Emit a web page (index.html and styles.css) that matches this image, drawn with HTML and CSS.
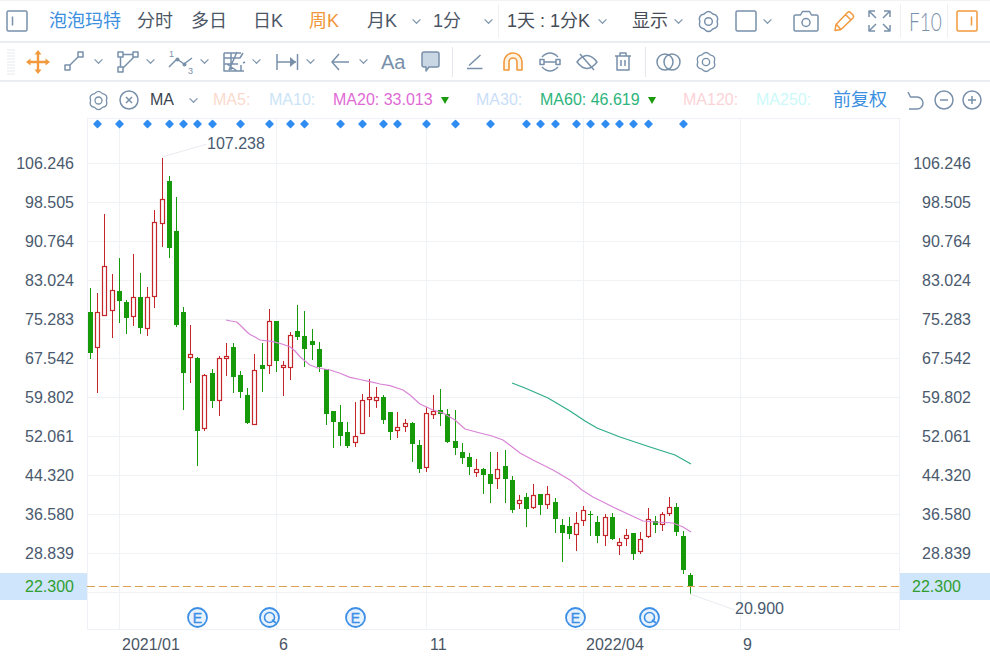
FILE: index.html
```html
<!DOCTYPE html>
<html lang="zh">
<head>
<meta charset="utf-8">
<title>泡泡玛特 周K</title>
<link rel="stylesheet" href="styles.css">
</head>
<body>
<svg class="defs" aria-hidden="true">
  <symbol id="gear" viewBox="0 0 24 24"><path d="M7.5 4.2Q12 -1 16.5 4.2Q23.3 5.5 21 12Q23.3 18.5 16.5 19.8Q12 25 7.5 19.8Q.7 18.5 3 12Q.7 5.5 7.5 4.2Z"/><circle cx="12" cy="12" r="4"/></symbol>
  <symbol id="chev" viewBox="0 0 12 8"><path d="M1.5 1.5L6 6L10.5 1.5"/></symbol>
</svg>
<header class="bar bar-main">
  <svg class="ic" width="22" height="22" viewBox="0 0 22 22"><rect x="1" y="1" width="20" height="20" rx="1.5"/><path d="M6.5 6.5V15.5"/></svg>
  <span class="tab tab-name">泡泡玛特</span>
  <span class="tab">分时</span>
  <span class="tab">多日</span>
  <span class="tab">日K</span>
  <span class="tab tab-on">周K</span>
  <span class="tab">月K</span>
  <svg class="ic chev"><use href="#chev"/></svg>
  <span class="tab">1分</span>
  <svg class="ic chev"><use href="#chev"/></svg>
  <i class="rule"></i>
  <span class="tab tab-dark">1天 : 1分K</span>
  <svg class="ic chev"><use href="#chev"/></svg>
  <span class="tab tab-dark">显示</span>
  <svg class="ic chev"><use href="#chev"/></svg>
  <svg class="ic" width="23" height="23"><use href="#gear"/></svg>
  <svg class="ic" width="22" height="22" viewBox="0 0 22 22"><rect x="1" y="1" width="20" height="20" rx="1.5"/></svg>
  <svg class="ic chev"><use href="#chev"/></svg>
  <svg class="ic" width="26" height="22" viewBox="0 0 26 22"><path d="M1 6.5Q1 5 2.500 5H7.500L9.500 1.500H16.500L18.500 5H23.500Q25 5 25 6.500V19.500Q25 21 23.500 21H2.500Q1 21 1 19.500Z"/><circle cx="13" cy="12.500" r="4"/></svg>
  <svg class="ic ic-hot" width="22" height="22" viewBox="0 0 22 22"><path d="M2 20.500L3 14.500L14.500 2.500Q16 1 17.500 2.500L20 5Q21.300 6.500 20 8L8 19.500ZM12.500 4.500L18 10M3.500 14.500L7.500 19"/></svg>
  <svg class="ic" width="23" height="22" viewBox="0 0 23 22"><path d="M1 7V1H7M16 1H22V7M1 15V21H7M16 21H22V15M2 2L8 8M21 2L15 8M2 20L8 14M21 20L15 14"/></svg>
  <i class="rule"></i>
  <span class="f10">F10</span>
  <i class="rule"></i>
  <svg class="ic ic-hot" width="22" height="22" viewBox="0 0 22 22"><rect x="1" y="1" width="20" height="20" rx="1.500"/><path d="M15.500 6.500V15.500"/></svg>
</header>

<nav class="bar bar-tools">
  <svg class="grip" width="8" height="26" viewBox="0 0 8 26"><path d="M0 1H8M0 4H8M0 7H8M0 10H8M0 13H8M0 16H8M0 19H8M0 22H8M0 25H8"/></svg>
  <svg class="ic ic-move" width="24" height="24" viewBox="0 0 24 24"><path d="M12 3V21M3 12H21"/><path class="solid" d="M12 0L15.500 4.500H8.500ZM12 24L15.500 19.500H8.500ZM0 12L4.500 8.500V15.500ZM24 12L19.500 8.500V15.500Z"/></svg>
  <svg class="ic" width="21" height="21" viewBox="0 0 21 21"><rect x="1" y="14" width="5" height="5"/><rect x="14" y="1" width="5" height="5"/><path d="M6 14L14 6"/></svg>
  <svg class="ic chev"><use href="#chev"/></svg>
  <svg class="ic" width="23" height="22" viewBox="0 0 23 22"><rect x="1" y="1" width="5" height="5"/><rect x="16" y="1" width="5" height="5"/><rect x="1" y="16" width="5" height="5"/><path d="M6 3.500H16M3.500 6V16M17 6L6 17"/></svg>
  <svg class="ic chev"><use href="#chev"/></svg>
  <svg class="ic" width="25" height="26" viewBox="0 0 25 26"><text class="mini" x="1" y="8">1</text><text class="mini" x="20" y="25">3</text><path d="M1 18L9 10L16 15L24 9"/><circle class="solid-b" cx="9.500" cy="10.500" r="2"/><circle class="solid-b" cx="16.500" cy="15.500" r="2"/></svg>
  <svg class="ic chev"><use href="#chev"/></svg>
  <svg class="ic" width="23" height="23" viewBox="0 0 23 23"><path d="M1 3H18M1 3V21H21M8 3V20M1 8H17M1 14H15M14 2L6 20M4 14L14 21M20 3L17 8M20 13L22 12M18 15V21"/></svg>
  <svg class="ic chev"><use href="#chev"/></svg>
  <svg class="ic" width="23" height="20" viewBox="0 0 23 20"><path d="M1 2V18M1 10H20M21.500 2V18"/><path class="solid-b" d="M14 5L20 10L14 15Z"/></svg>
  <svg class="ic chev"><use href="#chev"/></svg>
  <svg class="ic" width="19" height="18" viewBox="0 0 19 18"><path d="M8 1L1 9L8 17M1 9H18"/></svg>
  <svg class="ic chev"><use href="#chev"/></svg>
  <span class="aa">Aa</span>
  <svg class="ic ic-fill" width="19" height="21" viewBox="0 0 19 21"><path d="M3 1H16Q18 1 18 3V14Q18 16 16 16H8L5 20V16H3Q1 16 1 14V3Q1 1 3 1Z"/></svg>
  <i class="rule rule-tall"></i>
  <svg class="ic" width="17" height="17" viewBox="0 0 17 17"><path d="M1 15.500H16.500M3 12.500L14.500 2"/></svg>
  <svg class="ic ic-hot ic-mag" width="20" height="19" viewBox="0 0 20 19"><path d="M1 18V10A9 9 0 0 1 19 10V18H14V10A4 4 0 0 0 6 10V18Z"/></svg>
  <svg class="ic" width="22" height="22" viewBox="0 0 22 22"><path d="M3 6Q11 -2 19 6M3 16Q11 24 19 16M5 11H17"/><rect x="1" y="8.500" width="4" height="5"/><rect x="17" y="8.500" width="4" height="5"/></svg>
  <svg class="ic" width="22" height="20" viewBox="0 0 22 20"><path d="M1 10Q11 -3 21 10Q11 23 1 10ZM4 2L18 18"/></svg>
  <svg class="ic" width="18" height="19" viewBox="0 0 18 19"><path d="M1 4H17M6 4V1H12V4M3 4V18H15V4M7 8V14M11 8V14"/></svg>
  <i class="rule rule-tall"></i>
  <svg class="ic" width="25" height="18" viewBox="0 0 25 18"><circle cx="9" cy="9" r="8"/><circle cx="16" cy="9" r="8"/></svg>
  <svg class="ic" width="22" height="22"><use href="#gear"/></svg>
</nav>

<section class="bar bar-ma">
  <svg class="ic" width="21" height="21"><use href="#gear"/></svg>
  <svg class="ic" width="20" height="20" viewBox="0 0 20 20"><circle cx="10" cy="10" r="9"/><path d="M7 7L13 13M13 7L7 13"/></svg>
  <span class="ma-type">MA</span>
  <svg class="ic chev"><use href="#chev"/></svg>
  <span class="c-ma5">MA5:</span>
  <span class="c-ma10">MA10:</span>
  <span class="c-ma20">MA20: 33.013</span>
  <i class="down"></i>
  <span class="c-ma30">MA30:</span>
  <span class="c-ma60">MA60: 46.619</span>
  <i class="down"></i>
  <span class="c-ma120">MA120:</span>
  <span class="c-ma250">MA250:</span>
  <span class="fq">前复权</span>
  <svg class="ic" width="19" height="19" viewBox="0 0 19 19"><path d="M1 1L3.500 6H10A6 6 0 0 1 10 18H2"/></svg>
  <svg class="ic" width="20" height="20" viewBox="0 0 20 20"><circle cx="10" cy="10" r="9"/><path d="M6 10H14"/></svg>
  <svg class="ic" width="20" height="20" viewBox="0 0 20 20"><circle cx="10" cy="10" r="9"/><path d="M6 10H14M10 6V14"/></svg>
</section>

<main class="chart-wrap">
  <svg id="chart" class="chart" viewBox="0 118 990 540" width="990" height="540"></svg>
</main>
<script src="script.js"></script>
</body>
</html>
```

FILE: styles.css
```css
html, body {
  margin: 0;
  padding: 0;
  background: #fff;
  overflow: hidden;
  height: 658px;
}
body {
  font-family: "Liberation Sans", "Noto Sans CJK SC", sans-serif;
  color: #4a5565;
}
.defs { display: none; }
.bar {
  display: grid;
  align-items: center;
  justify-items: start;
  box-sizing: border-box;
}
.bar-main {
  height: 43px;
  border-top: 1px solid #f0f2f4;
  border-bottom: 2px solid #e9ecf0;
  padding-left: 6px;
  grid-template-columns: 43px 88px 54px 62px 56px 58px 44px 22px 50px 15px 9px 90px 35px 41px 24px 38px 27px 31px 40px 35px 32px 9px 38px 9px 22px;
}
.bar-tools {
  height: 39px;
  border-bottom: 2px solid #e9ecf0;
  padding-left: 7px;
  grid-template-columns: 19px 38px 29px 24px 28px 23px 31px 24px 28px 25px 29px 26px 27px 23px 40px 31px 14px 37px 36px 37px 38px 31px 11px 39px 22px;
}
.bar-ma {
  height: 36px;
  padding-left: 88px;
  font-size: 16px;
  white-space: nowrap;
  grid-template-columns: 31px 31px 38px 25px 56px 64px 108px 35px 64px 108px 35px 73px 77px 74px 27px 28px 20px;
}
.ic {
  display: block;
  fill: none;
  stroke: #7890aa;
  stroke-width: 1.5;
  stroke-linejoin: round;
  overflow: visible;
}
.chev {
  width: 11px;
  height: 7px;
  stroke: #8298ae;
  stroke-width: 1.4;
}
.ic-hot { stroke: #f1993c; }
.ic-move { stroke: #f1993c; stroke-width: 2.4; }
.solid { fill: #f1993c; stroke: none; }
.solid-b { fill: #7890aa; stroke: none; }
.ic-fill { fill: #c9d6e3; }
.ic-mag { fill: #fdf3e3; stroke-width: 1.6; }
.mini {
  font-family: "Liberation Sans", sans-serif;
  font-size: 9px;
  fill: #7890aa;
  stroke: none;
}
.tab {
  font-size: 18px;
  line-height: 24px;
  color: #4b5666;
  white-space: nowrap;
}
.tab-name { color: #3d8fe0; }
.tab-on { color: #f0963a; }
.tab-dark { color: #454c56; }
.rule {
  display: block;
  width: 1px;
  height: 34px;
  background: #eef0f3;
}
.rule-tall { height: 30px; background: #e4e7eb; }
.f10 {
  font-family: Lato, "Liberation Sans", sans-serif;
  font-weight: 300;
  font-size: 25px;
  line-height: 28px;
  color: #7890aa;
  transform: scaleX(0.76);
  transform-origin: left center;
}
.aa {
  font-size: 20px;
  line-height: 24px;
  color: #7890aa;
}
.grip { stroke: #e6e9ed; stroke-width: 1; display: block; }
.ma-type { color: #3b4450; font-size: 16px; }
.c-ma5 { color: #fbdacd; }
.c-ma10 { color: #cbe4f6; }
.c-ma20 { color: #df6ad5; }
.c-ma30 { color: #cadef8; }
.c-ma60 { color: #2db47c; }
.c-ma120 { color: #fbd3d7; }
.c-ma250 { color: #ccf9f9; }
.fq { color: #3d8fe0; font-size: 18px; line-height: 24px; }
.down {
  display: block;
  width: 0;
  height: 0;
  border-left: 4.5px solid transparent;
  border-right: 4.5px solid transparent;
  border-top: 7px solid #1a9a0c;
}
.chart-wrap { height: 540px; }
.chart { display: block; font-family: "Liberation Sans", sans-serif; }
.frame { fill: none; stroke: #eef1f5; stroke-width: 1; }
.grid { stroke: #f0f3f6; stroke-width: 1; fill: none; }
.axis { font-size: 16px; fill: #4a5a6e; }
.axis-x { font-size: 16px; fill: #4a5565; }
.note { font-size: 16px; fill: #4a5a70; }
.leader { stroke: #e9ebf0; stroke-width: 1; fill: none; }
.tag-bg { fill: #cfe5fc; }
.tag-text { font-size: 16px; fill: #2f9e2f; }
.dash { stroke: #dc9f52; stroke-width: 1.2; stroke-dasharray: 8 4; fill: none; }
.dia { fill: #2f8cf0; stroke: #2f8cf0; stroke-width: 1.5; stroke-linejoin: round; }
.up { fill: #fff; stroke: #c4262a; stroke-width: 1.2; }
.up-w { fill: #c4262a; }
.dn { fill: #169a0a; }
.ma20 { fill: none; stroke: #d884d6; stroke-width: 1.2; }
.ma60 { fill: none; stroke: #2fac8a; stroke-width: 1.2; }
.ev-c { fill: #e8f3fe; stroke: #3d8fe6; stroke-width: 1.8; }
.ev-t { font-size: 14px; fill: #3d8fe6; text-anchor: middle; stroke: #3d8fe6; stroke-width: 0.4; }
.ev-i { fill: none; stroke: #3d8fe6; stroke-width: 1.6; }
```

FILE: script.js
```js
// [high, bodyTop, bodyBottom, low, up(1)/down(0)]
var K = [
[288,312,353,359,0],[293,312,348,393,1],[214,266,316,316,1],[274,290,311,338,1],[258,291,301,323,0],
[300,302,318,334,0],[254,297,317,326,1],[273,297,328,334,0],[287,297,329,336,1],[210,222,297,308,1],
[158,199,224,247,1],[176,181,248,258,0],[197,231,325,327,0],[307,312,373,410,0],[325,354,358,383,1],
[357,358,431,466,0],[374,375,429,431,1],[369,373,401,408,0],[356,358,401,416,1],[343,356,359,376,1],
[343,347,377,393,0],[371,375,392,398,0],[388,395,423,424,0],[354,370,425,425,1],[343,365,369,392,0],
[309,321,366,374,1],[321,321,361,372,0],[361,365,368,396,1],[332,335,368,380,1],[305,331,337,340,0],
[311,336,349,367,0],[329,341,345,360,0],[342,349,367,372,0],[369,369,414,425,0],[411,411,422,448,0],
[405,422,436,446,0],[422,432,446,448,0],[402,436,443,447,1],[394,400,434,434,1],[379,397,400,417,1],
[387,397,401,408,1],[395,397,420,424,0],[412,412,432,440,0],[412,427,431,438,1],[419,423,427,432,1],
[422,423,444,462,0],[440,445,469,473,0],[407,413,468,472,1],[395,411,415,419,1],[389,410,414,426,0],
[409,414,442,443,0],[410,441,448,455,0],[443,452,458,464,0],[453,457,467,475,0],[459,469,473,477,1],
[468,469,475,494,0],[452,474,484,503,0],[452,469,479,489,1],[450,466,479,503,0],[476,480,510,513,0],
[495,500,504,509,1],[493,497,509,527,0],[484,495,508,509,1],[494,494,505,515,0],[486,494,505,509,1],
[498,502,519,533,0],[519,525,533,562,0],[517,526,534,539,0],[512,523,535,551,1],[506,510,521,526,1],
[511,514,515,536,0],[516,522,536,543,0],[514,517,536,546,1],[513,517,539,540,0],[538,542,546,555,1],
[529,535,539,546,1],[533,533,554,560,0],[532,539,552,554,1],[508,519,537,538,1],[516,521,525,533,0],
[512,514,525,531,1],[497,507,514,516,1],[503,507,532,536,0],[531,536,570,574,0],[573,575,586,594,0]
];
var LONG_STEPS = {3:1,10:1,17:1,24:1,31:1,37:1,44:1,51:1,58:1,65:1,72:1,78:1};
var TICKS = ["106.246","98.505","90.764","83.024","75.283","67.542","59.802","52.061","44.320","36.580","28.839"];
var DIAMONDS = [97,119,147,169,183,197,212,240,269,290,304,340,362,383,397,426,455,490,526,540,555,576,590,605,619,633,648,683];
var MA20 = "226,320 231,321 236.700,322 240,325 243,328 247,332 250,334.500 255,337 260,340 273,341.700 282,344 290,346.700 295,351 300,356.700 305,361 310,365 318,368 330,370 340,373.300 350,377.300 360,379.500 370,381.700 380,384 390,385.700 403,390 410,395 420,404 433,410 443,413 455,420 465,429 480,433 492,436 503,440 511,446 520,453 533,460 553,470 570,480 582,490 593,497 613,507 630,515 643,521 655,522 673,523 683,527 691,532";
var MA60 = "512,383 525,388 548,398 570,411 585,421 597,428 620,437 650,447 675,455 691,464";

var h = [];
function add(s){ h.push(s); }

// frame and grid
add('<rect class="frame" x="87.500" y="118.500" width="812" height="511"/>');
for (var gy = 163; gy <= 592; gy += 39) add('<path class="grid" d="M88 '+(gy+.5)+'H899"/>');
[119,276,426,583,740].forEach(function(x){ add('<path class="grid" d="M'+(x+.5)+' 119V629"/>'); });

// axes
TICKS.forEach(function(t,i){
  var y = 169 + i*39;
  add('<text class="axis" x="74" y="'+y+'" text-anchor="end">'+t+'</text>');
  add('<text class="axis" x="971" y="'+y+'" text-anchor="end">'+t+'</text>');
});
[[122,"2021/01"],[279,"6"],[430,"11"],[586,"2022/04"],[743,"9"]].forEach(function(l){
  add('<text class="axis-x" x="'+l[0]+'" y="650">'+l[1]+'</text>');
});

// price tag
add('<rect class="tag-bg" x="0" y="573" width="87" height="27"/><rect class="tag-bg" x="900" y="573" width="90" height="27"/>');
add('<text class="tag-text" x="74" y="592" text-anchor="end">22.300</text><text class="tag-text" x="961" y="592" text-anchor="end">22.300</text>');

// top markers
DIAMONDS.forEach(function(x){
  var y = 124;
  add('<path class="dia" d="M'+(x+.5)+' '+(y-3.5)+'L'+(x+4)+' '+y+'L'+(x+.5)+' '+(y+3.5)+'L'+(x-3)+' '+y+'Z"/>');
});

add('<polyline class="ma60" points="'+MA60+'"/>');

// candles
var x = 90;
K.forEach(function(c,i){
  if (i > 0) x += LONG_STEPS[i] ? 8 : 7;
  if (c[4]) {
    add('<rect class="up-w" x="'+x+'" y="'+c[0]+'" width="1" height="'+(c[3]-c[0])+'"/>');
    add('<rect class="up" x="'+(x-1.5)+'" y="'+(c[1]+.5)+'" width="4" height="'+Math.max(1,c[2]-c[1]-1)+'"/>');
  } else {
    add('<rect class="dn" x="'+x+'" y="'+c[0]+'" width="1" height="'+(c[3]-c[0])+'"/>');
    add('<rect class="dn" x="'+(x-2)+'" y="'+c[1]+'" width="5" height="'+Math.max(1,c[2]-c[1])+'"/>');
  }
});
add('<polyline class="ma20" points="'+MA20+'"/>');

// price line
add('<path class="dash" d="M87 586.500H900"/>');

// extreme notes
add('<path class="leader" d="M162 157L207 144"/><text class="note" x="207" y="149">107.238</text>');
add('<path class="leader" d="M690 594L735 610"/><text class="note" x="735" y="614">20.900</text>');

// events
[[197,"E"],[269,"Q"],[355,"E"],[575,"E"],[649,"Q"]].forEach(function(e){
  add('<circle class="ev-c" cx="'+e[0]+'.500" cy="617.500" r="9.500"/>');
  if (e[1] === "Q") {
    add('<circle class="ev-i" cx="'+e[0]+'.500" cy="617.500" r="5"/><path class="ev-i" d="M'+(e[0]+3)+' 620L'+(e[0]+7)+' 623"/>');
  } else {
    add('<text class="ev-t" x="'+e[0]+'.500" y="622.500">'+e[1]+'</text>');
  }
});

document.getElementById("chart").innerHTML = h.join("");
```
